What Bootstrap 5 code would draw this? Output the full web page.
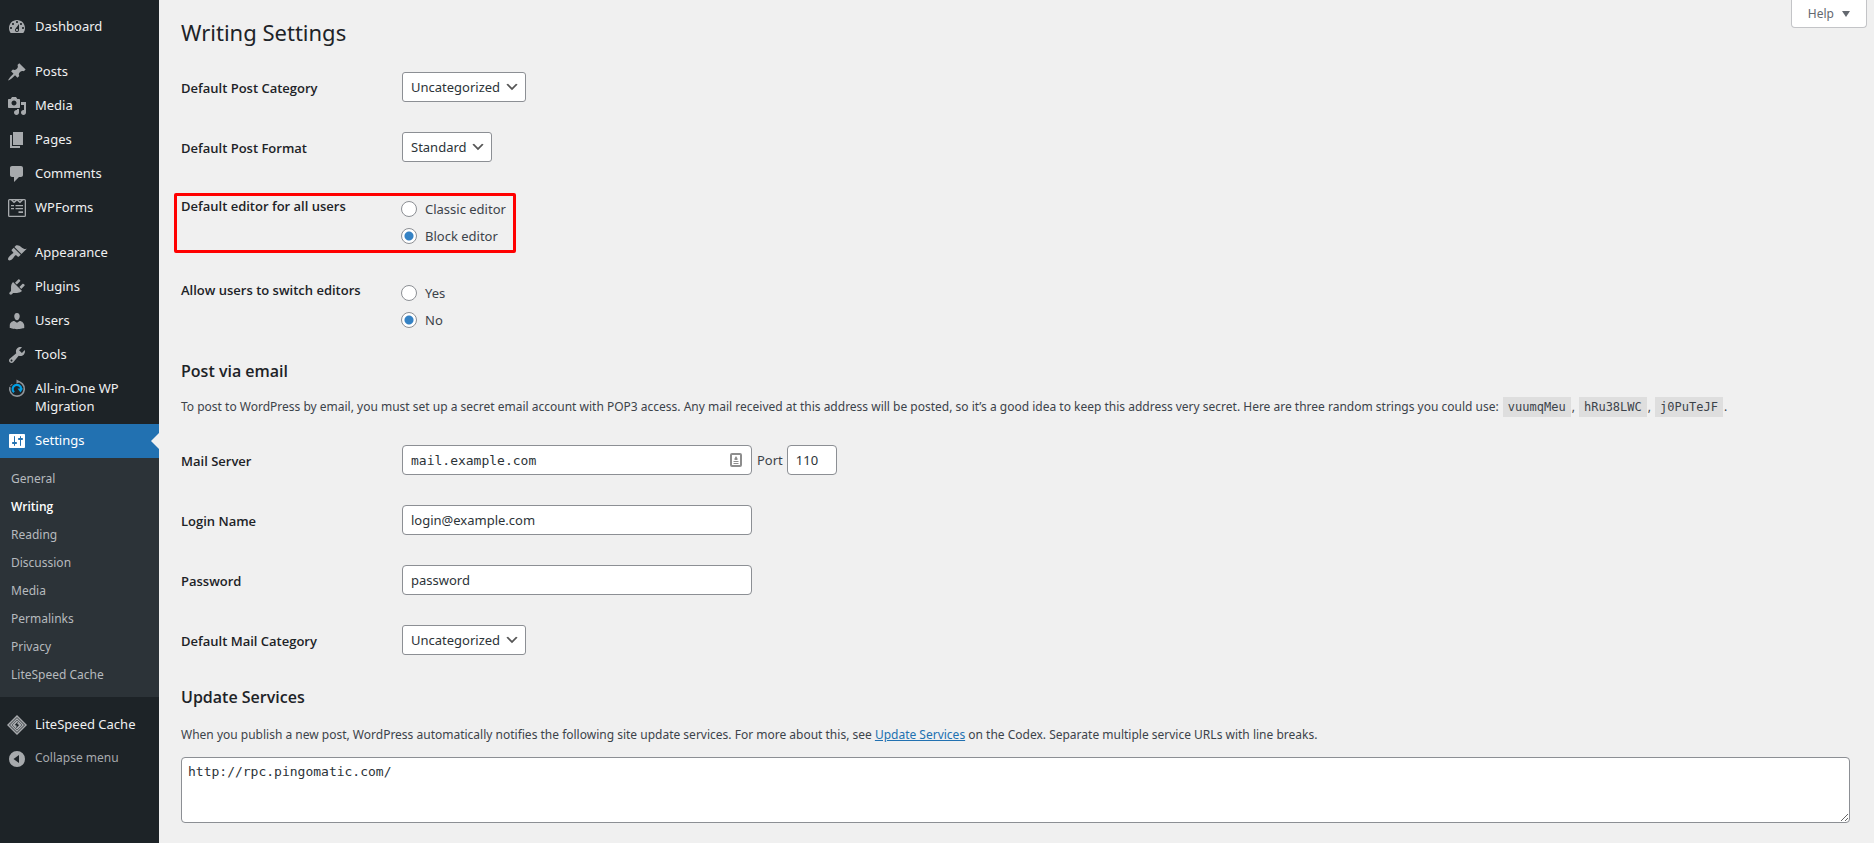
<!DOCTYPE html>
<html lang="en">
<head>
<meta charset="utf-8">
<meta name="viewport" content="width=device-width, initial-scale=1">
<title>Writing Settings</title>
<link rel="stylesheet" href="https://cdn.jsdelivr.net/npm/bootstrap@5.3.0/dist/css/bootstrap.min.css">
<style>
  :root { --ink: #1d2327; --text: #3c434a; --line: #8c8f94; --blue: #2271b1; --page: #f0f0f0; }
  body { font: 13px/20px "Noto Sans", "Open Sans", sans-serif; color: var(--text); background: var(--page); }

  /* Sidebar */
  .sidebar { width: 159px; background: var(--ink); padding-top: 10px; }
  .menu-group { padding-bottom: 11px; }
  .menu-link { display: flex; gap: 8px; padding: 7px 8px 9px 7px; color: #f0f0f1; line-height: 18px; text-decoration: none; position: relative; width: 100%; border: 0; background: none; text-align: left; }
  .menu-link:hover { color: #72aee6; }
  .menu-link svg { width: 20px; height: 20px; flex: none; fill: #a7aaad; margin-bottom: -2px; }
  .menu-link.current { background: var(--blue); color: #fff; }
  .menu-link.current svg { fill: #fff; }
  .menu-link.current::after { content: ""; position: absolute; right: 0; top: 9px; border: 8px solid transparent; border-right-color: var(--page); border-left: 0; }
  .menu-link.muted { color: #a7aaad; font-size: 12px; }
  .submenu { background: #2c3338; padding: 7px 0 8px; margin-bottom: 11px; font-size: 12px; }
  .submenu a { display: block; padding: 5px 11px; line-height: 18px; color: #b6babe; text-decoration: none; }
  .submenu a.current { color: #fff; font-family: "Open Sans", sans-serif; font-weight: 600; }

  /* Content */
  .content { padding: 0 24px 16px 22px; min-width: 0; }
  .help-btn { position: absolute; top: 0; right: 7px; height: 28px; padding: 0 16px; font-size: 12px; background: #fff; color: #646970; border: 1px solid #c3c4c7; border-top: 0; border-radius: 0 0 4px 4px; }
  h1 { font-size: 22px; line-height: 30px; font-weight: 400; color: var(--ink); margin: 17px 0 25px; }
  h2 { font: 600 16px/24px "Open Sans", sans-serif; color: var(--ink); margin: 25px 0 14px; }
  .form-rows { display: flex; flex-direction: column; gap: 30px; }
  .form-rows + h2.after-fields { margin: 30px 0 16px; }
  .help-text { font-size: 12px; line-height: 20px; margin: 0 0 28px; }
  .help-text.tight { margin-bottom: 12px; }
  .help-text code { font: 12px/15px "DejaVu Sans Mono", monospace; color: var(--text); background: #dedede; padding: 3px 5px; margin: 0 1px; }
  .help-text a { color: var(--blue); }
  .field-row { display: flex; min-height: 30px; }
  .field-name { width: 221px; flex: none; color: var(--ink); font: 600 13px/20px "Open Sans", sans-serif; }
  .field-row.single .field-name { line-height: 32px; height: 30px; }
  .radio-rows { margin-top: 34px; }
  .highlight { border: 3px solid #f00; border-radius: 2px; margin: -3px auto -3px -7px; padding: 0 6px 0 4px; width: 342px; }
  .ctl, .ctl:focus { border: 1px solid var(--line); border-radius: 4px; background-color: #fff; color: #2c3338; height: 30px; padding: 0 8px; font-size: 13px; line-height: 28px; box-shadow: none; }
  select.ctl { width: auto; padding-right: 24px; border-radius: 3px; background-position: right 5px center; background-size: 16px 16px;
    background-image: url("data:image/svg+xml,%3Csvg xmlns='http://www.w3.org/2000/svg' viewBox='0 0 20 20'%3E%3Cpath d='M5 6l5 5 5-5 2 1-7 7-7-7 2-1z' fill='%23555'/%3E%3C/svg%3E"); }
  .w-regular { width: 350px; }
  .w-port { width: 50px; }
  .port-name { margin: 0 4px 0 5px; }
  .ctl.mono { font-family: "DejaVu Sans Mono", monospace; }
  .autofill { position: absolute; right: 10px; top: 8px; }
  .choice { display: flex; align-items: center; height: 27px; padding-bottom: 2px; gap: 8px; margin-left: -1px; }
  .choice .form-check-input { width: 16px; height: 16px; margin: 0; float: none; border: 1px solid var(--line); background-size: 100%; background-color: #fff; box-shadow: none; }
  .choice .form-check-input:checked { background-image: radial-gradient(circle, #3582c4 4px, transparent 5px); }
  textarea.ctl { height: 66px; padding: 4px 6px; line-height: 20px; }
</style>
</head>
<body>
<div class="d-flex min-vh-100">
  <nav class="sidebar flex-shrink-0" aria-label="Main menu">
    <div class="menu-group">
      <a class="menu-link" href="#"><svg viewBox="0 0 20 20"><path fill-rule="evenodd" d="M3.76 16h12.48c1.1-1.37 1.76-3.11 1.76-5 0-4.42-3.58-8-8-8s-8 3.58-8 8c0 1.89.66 3.63 1.76 5zM10 4c.55 0 1 .45 1 1s-.45 1-1 1-1-.45-1-1 .45-1 1-1zM6 6c.55 0 1 .45 1 1s-.45 1-1 1-1-.45-1-1 .45-1 1-1zm8 0c.55 0 1 .45 1 1s-.45 1-1 1-1-.45-1-1 .45-1 1-1zm-5.37 5.55L12 7v6c0 1.1-.9 2-2 2s-2-.9-2-2c0-.57.24-1.08.63-1.45zM4 10c.55 0 1 .45 1 1s-.45 1-1 1-1-.45-1-1 .45-1 1-1zm12 0c.55 0 1 .45 1 1s-.45 1-1 1-1-.45-1-1 .45-1 1-1zm-5 3c0-.55-.45-1-1-1s-1 .45-1 1 .45 1 1 1 1-.45 1-1z"/></svg>Dashboard</a>
    </div>
    <div class="menu-group">
      <a class="menu-link" href="#"><svg viewBox="0 0 20 20"><path d="M10.44 3.02l1.82-1.82 6.36 6.35-1.83 1.82c-1.05-.68-2.48-.57-3.41.36l-.75.75c-.92.93-1.04 2.35-.35 3.41l-1.83 1.82-2.41-2.41-2.8 2.79c-.42.42-3.38 2.71-3.8 2.29s1.86-3.39 2.28-3.81l2.79-2.79L4.1 9.36l1.83-1.82c1.05.69 2.48.57 3.4-.36l.75-.75c.93-.92 1.05-2.35.36-3.41z"/></svg>Posts</a>
      <a class="menu-link" href="#"><svg viewBox="0 0 20 20"><path fill-rule="evenodd" d="M13 11V4c0-.55-.45-1-1-1h-1.67L9 1H5L3.67 3H2c-.55 0-1 .45-1 1v7c0 .55.45 1 1 1h10c.55 0 1-.45 1-1zM7 4.5c1.38 0 2.5 1.12 2.5 2.5S8.38 9.5 7 9.5 4.5 8.38 4.5 7 5.62 4.5 7 4.5zM14 6h5v10.5c0 1.38-1.12 2.5-2.5 2.5S14 17.88 14 16.5s1.12-2.5 2.5-2.5c.17 0 .34.02.5.05V9h-3V6zm-4 8.05V13h2v3.5c0 1.38-1.12 2.5-2.5 2.5S7 17.88 7 16.5 8.12 14 9.5 14c.17 0 .34.02.5.05z"/></svg>Media</a>
      <a class="menu-link" href="#"><svg viewBox="0 0 20 20"><path d="M6 15V2h10v13H6zm-1 1h8v2H3V5h2v11z"/></svg>Pages</a>
      <a class="menu-link" href="#"><svg viewBox="0 0 20 20"><path d="M5 2h9c1.1 0 2 .9 2 2v7c0 1.1-.9 2-2 2h-2l-5 5v-5H5c-1.1 0-2-.9-2-2V4c0-1.1.9-2 2-2z"/></svg>Comments</a>
      <a class="menu-link" href="#"><svg viewBox="0 0 20 20"><path fill-rule="evenodd" d="M2.500 1h15A1.500 1.500 0 0 1 19 2.500v15a1.500 1.500 0 0 1-1.500 1.500h-15A1.500 1.500 0 0 1 1 17.500v-15A1.500 1.500 0 0 1 2.500 1zM2.300 2.300v15.400h15.400V2.300h-1.500L13 5.200l-3-2.400-3 2.400-3.200-2.900zM6 2.300l1 1 1.400-1zm5.600 0l1.400 1 1-1zM4 7h3v1.300H4zm4.500 0H16v1.300H8.500zM4 10h3v1.300H4zm4.500 0H16v1.300H8.500zM11.500 13.200H16v1.800h-4.500z"/></svg>WPForms</a>
    </div>
    <div>
      <a class="menu-link" href="#"><svg viewBox="0 0 20 20"><path d="M14.48 11.06L7.41 3.99l1.5-1.5c.5-.56 2.3-.47 3.51.32 1.21.8 1.43 1.28 2.91 2.1 1.18.64 2.45 1.26 4.45.85zm-.71.71L6.7 4.7 4.93 6.47c-.39.39-.39 1.02 0 1.41l1.06 1.06c.39.39.39 1.03 0 1.42-.6.6-1.43 1.11-2.21 1.69-.35.26-.7.53-1.01.84C1.43 14.23.4 16.08 1.4 17.07c.99 1 2.84-.03 4.18-1.36.31-.31.58-.66.85-1.02.57-.78 1.08-1.61 1.69-2.21.39-.39 1.02-.39 1.41 0l1.06 1.06c.39.39 1.02.39 1.41 0z"/></svg>Appearance</a>
      <a class="menu-link" href="#"><svg viewBox="0 0 20 20"><path d="M13.11 4.36L9.87 7.6 8 5.73l3.24-3.24c.35-.34 1.05-.2 1.56.32.52.51.66 1.21.31 1.55zm-8 1.77l.91-1.12 9.01 9.01-1.19.84c-.71.71-2.63 1.16-3.82 1.16H6.14L4.9 17.26c-.59.59-1.54.59-2.12 0-.59-.58-.59-1.53 0-2.12l1.24-1.24v-3.88c0-1.13.4-3.19 1.09-3.89zm7.26 3.97l3.24-3.24c.34-.35 1.04-.21 1.55.31.52.51.66 1.21.31 1.55l-3.24 3.25z"/></svg>Plugins</a>
      <a class="menu-link" href="#"><svg viewBox="0 0 20 20"><path d="M10 9.25c-2.27 0-2.73-3.44-2.73-3.44C7 4.02 7.82 2 9.97 2c2.16 0 2.98 2.02 2.71 3.81 0 0-.41 3.44-2.68 3.44zm0 2.57L12.72 10c2.39 0 4.52 2.33 4.52 4.53v2.49s-3.65 1.13-7.24 1.13c-3.65 0-7.24-1.13-7.24-1.13v-2.49c0-2.25 1.94-4.48 4.47-4.48z"/></svg>Users</a>
      <a class="menu-link" href="#"><svg viewBox="0 0 20 20"><path fill-rule="evenodd" d="M16.68 9.77c-1.34 1.34-3.3 1.67-4.95.99l-5.41 6.52c-.99.99-2.59.99-3.58 0s-.99-2.59 0-3.57l6.52-5.42c-.68-1.65-.35-3.61.99-4.95 1.28-1.28 3.12-1.62 4.72-1.06l-2.89 2.89 2.82 2.82 2.86-2.87c.53 1.58.18 3.39-1.08 4.65zM3.81 16.21c.4.39 1.04.39 1.43 0 .4-.4.4-1.04 0-1.43-.39-.4-1.03-.4-1.43 0-.39.39-.39 1.03 0 1.43z"/></svg>Tools</a>
      <a class="menu-link" href="#"><svg viewBox="0 0 20 20"><g fill="none"><path d="M10 2.500a7.300 7.300 0 1 1-7.100 5.600" stroke="#8f9499" stroke-width="1.600"/><path d="M5.300 5L3.200 7.300" stroke="#8f9499"/><path d="M7 13.300a4.300 4.300 0 1 1 7.200-3.300" stroke="#00a0e6" stroke-width="2.200"/></g><path d="M9.500.5l3.500 2-3.500 2.300z" fill="#8f9499"/><path d="M10.500 9.500h5.500l-2.500 4z" fill="#00a0e6"/></svg>All-in-One WP Migration</a>
      <a class="menu-link current" href="#" aria-current="true"><svg viewBox="0 0 20 20"><path fill-rule="evenodd" d="M18 16V4c0-.55-.45-1-1-1H3c-.55 0-1 .45-1 1v12c0 .55.45 1 1 1h14c.55 0 1-.45 1-1zM8 11h1c.55 0 1 .45 1 1s-.45 1-1 1H8v1.500c0 .28-.22.5-.5.5s-.5-.22-.5-.5V13H6c-.55 0-1-.45-1-1s.45-1 1-1h1V5.500c0-.28.22-.5.5-.5s.5.22.5.5V11zm5-2h-1c-.55 0-1-.45-1-1s.45-1 1-1h1V5.500c0-.28.22-.5.5-.5s.5.22.5.5V7h1c.55 0 1 .45 1 1s-.45 1-1 1h-1v5.500c0 .28-.22.5-.5.5s-.5-.22-.5-.5V9z"/></svg>Settings</a>
      <div class="submenu">
        <a href="#">General</a>
        <a href="#" class="current" aria-current="page">Writing</a>
        <a href="#">Reading</a>
        <a href="#">Discussion</a>
        <a href="#">Media</a>
        <a href="#">Permalinks</a>
        <a href="#">Privacy</a>
        <a href="#">LiteSpeed Cache</a>
      </div>
    </div>
    <div>
      <a class="menu-link" href="#"><svg viewBox="0 0 20 20"><path d="M10 0l10 10-10 10L0 10z"/><g fill="none" stroke="#1d2327" stroke-width=".8"><path d="M10 2.500l7.500 7.500-7.500 7.500L2.500 10z"/><path d="M10 5l5 5-5 5-5-5z" stroke-width=".5"/></g><path d="M11 6.500L7.800 10l2 .8L8.800 13.500l3.400-3.600-2-.9z" fill="#1d2327"/></svg>LiteSpeed Cache</a>
      <button class="menu-link muted" type="button"><svg viewBox="0 0 20 20"><path fill-rule="evenodd" d="M10 2a8 8 0 1 1 0 16 8 8 0 0 1 0-16zm2 4l-5.500 4L12 14z"/></svg>Collapse menu</button>
    </div>
  </nav>

  <main class="content flex-grow-1 position-relative">
    <button class="help-btn d-flex align-items-center gap-2" type="button">Help <svg width="8" height="6" viewBox="0 0 8 6"><path d="M0 0h8L4 6z" fill="#646970"/></svg></button>
    <h1>Writing Settings</h1>
    <form>
      <div class="form-rows">
        <div class="field-row single"><label class="field-name" for="cat">Default Post Category</label>
          <div><select class="form-select ctl" id="cat"><option>Uncategorized</option></select></div></div>
        <div class="field-row single"><label class="field-name" for="format">Default Post Format</label>
          <div><select class="form-select ctl" id="format"><option>Standard</option></select></div></div>
      </div>
      <div class="form-rows radio-rows">
        <div class="field-row highlight" role="radiogroup" aria-labelledby="ed-name"><div class="field-name" id="ed-name">Default editor for all users</div>
          <div>
            <label class="choice"><input class="form-check-input" type="radio" name="editor">Classic editor</label>
            <label class="choice"><input class="form-check-input" type="radio" name="editor" checked>Block editor</label>
          </div></div>
        <div class="field-row" role="radiogroup" aria-labelledby="sw-name"><div class="field-name" id="sw-name">Allow users to switch editors</div>
          <div>
            <label class="choice"><input class="form-check-input" type="radio" name="switch">Yes</label>
            <label class="choice"><input class="form-check-input" type="radio" name="switch" checked>No</label>
          </div></div>
      </div>

      <h2>Post via email</h2>
      <p class="help-text">To post to WordPress by email, you must set up a secret email account with POP3 access. Any mail received at this address will be posted, so it’s a good idea to keep this address very secret. Here are three random strings you could use: <code>vuumqMeu</code>, <code>hRu38LWC</code>, <code>j0PuTeJF</code>.</p>
      <div class="form-rows">
        <div class="field-row single"><label class="field-name" for="server">Mail Server</label>
          <div class="d-flex align-items-center">
            <div class="position-relative"><input class="form-control ctl mono w-regular" id="server" type="text" value="mail.example.com">
              <svg class="autofill" width="12" height="14" viewBox="0 0 12 14"><rect x="1" y="1" width="10" height="12" rx="1" fill="#fff" stroke="#8d8d8d" stroke-width="2"/><path d="M6 3l1.500 2.500V7h-3V5.500zM3.500 8h5v1h-5zm0 2h5v1h-5z" fill="#8d8d8d"/></svg></div>
            <label class="port-name" for="port">Port</label>
            <input class="form-control ctl w-port" id="port" type="text" value="110">
          </div></div>
        <div class="field-row single"><label class="field-name" for="login">Login Name</label>
          <div><input class="form-control ctl w-regular" id="login" type="text" value="login@example.com"></div></div>
        <div class="field-row single"><label class="field-name" for="pass">Password</label>
          <div><input class="form-control ctl w-regular" id="pass" type="text" value="password"></div></div>
        <div class="field-row single"><label class="field-name" for="mailcat">Default Mail Category</label>
          <div><select class="form-select ctl" id="mailcat"><option>Uncategorized</option></select></div></div>
      </div>

      <h2 class="after-fields">Update Services</h2>
      <p class="help-text tight"><label for="ping">When you publish a new post, WordPress automatically notifies the following site update services. For more about this, see <a href="#">Update Services</a> on the Codex. Separate multiple service URLs with line breaks.</label></p>
      <textarea class="form-control ctl mono" id="ping" rows="3">http://rpc.pingomatic.com/</textarea>
    </form>
  </main>
</div>
<script src="https://cdn.jsdelivr.net/npm/bootstrap@5.3.0/dist/js/bootstrap.bundle.min.js"></script>
</body>
</html>
